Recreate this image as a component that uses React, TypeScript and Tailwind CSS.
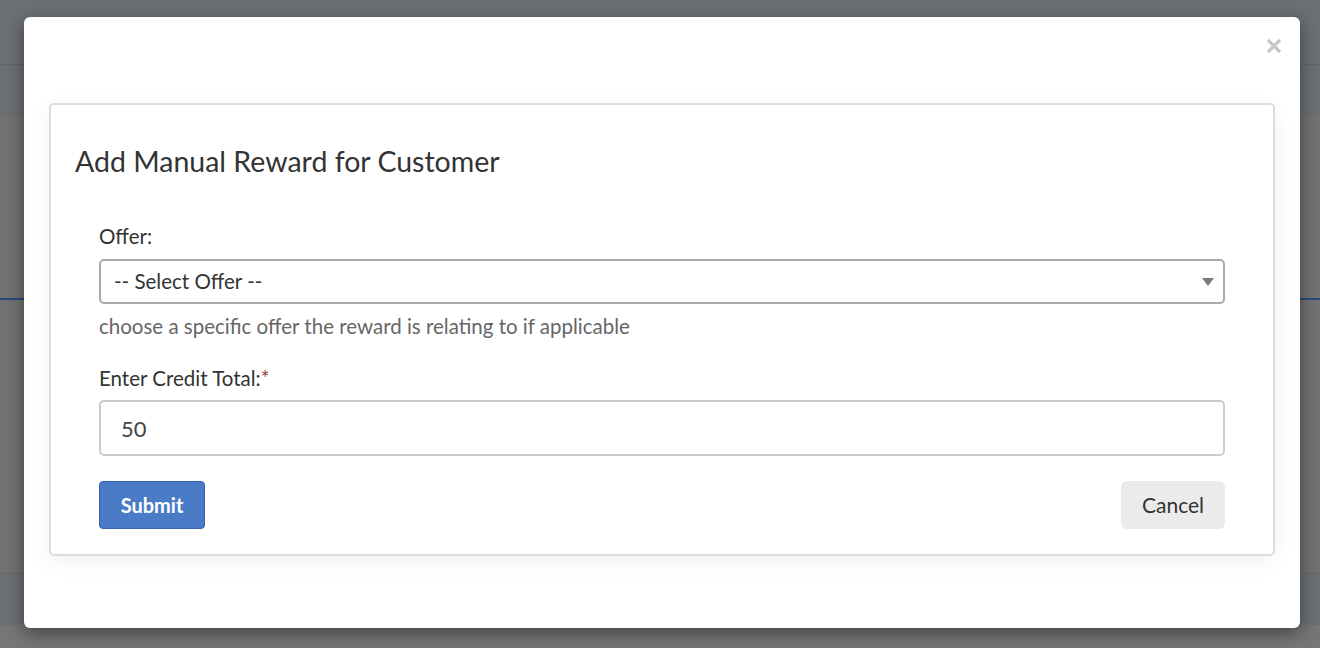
import React, { useState } from 'react';

const font = { fontFamily: 'Lato, "Open Sans", sans-serif' };

export default function App() {
  const [offer, setOffer] = useState('');
  const [credit, setCredit] = useState('50');

  return (
    <div className="relative w-[1320px] h-[648px] overflow-hidden bg-[#767676]" style={font}>
      {/* page behind the dimmed overlay */}
      <div className="h-[65px] bg-[#6b7075] border-b border-[#61666a]" />
      <div className="h-[50px] bg-[#6b7075]" />
      <div className="h-[185px] bg-[#727272] border-b-2 border-[#284a7c]" />
      <div className="h-[273px] bg-[#727272]" />
      <div className="h-[52px] bg-[#6b7075] border-t border-[#66696c]" />

      {/* modal */}
      <div className="absolute left-[24px] top-[17px] w-[1276px] h-[611px] bg-white rounded-md shadow-[0_5px_18px_rgba(0,0,0,0.45)] pt-[86px] px-[25px]">
        <button className="absolute right-[18px] top-[21px] text-[#c6c6c6]">
          <svg width="16" height="16" viewBox="0 0 16 16">
            <path d="M2 2L14 14M14 2L2 14" stroke="currentColor" strokeWidth="3.2" strokeLinecap="butt" />
          </svg>
        </button>

        <div className="border-2 border-[#d8dee2] rounded-[5px] bg-white shadow-[0_6px_22px_rgba(0,0,0,0.06)] pt-[41px] px-[24px] pb-[25px]">
          <h3 className="text-[28.5px] leading-[31px] text-[#333333]">Add Manual Reward for Customer</h3>

          <div className="px-[24px] mt-[46px]">
            <label className="block text-[20.5px] leading-[27px] text-[#333333]">Offer:</label>
            <div className="relative mt-[9px]">
              <select
                value={offer}
                onChange={e => setOffer(e.target.value)}
                className="appearance-none w-full h-[45px] border-2 border-[#a9a9a9] rounded-[5px] bg-white pl-[13px] text-[20.5px] text-[#333333] outline-none"
                style={font}
              >
                <option value="">-- Select Offer --</option>
              </select>
              <div className="pointer-events-none absolute right-[11px] top-[19px] w-0 h-0 border-l-[6px] border-r-[6px] border-t-[8px] border-l-transparent border-r-transparent border-t-[#7a7a7a]" />
            </div>
            <p className="mt-[9px] text-[20.5px] leading-[27px] text-[#666666]">
              choose a specific offer the reward is relating to if applicable
            </p>

            <label className="block mt-[25px] text-[20.5px] leading-[27px] text-[#333333]">
              Enter Credit Total:<span className="text-[#a23b3b]">*</span>
            </label>
            <input
              value={credit}
              onChange={e => setCredit(e.target.value)}
              className="block mt-[8px] w-full h-[56px] border-2 border-[#cccccc] rounded-[5px] px-[20px] text-[22px] text-[#444444] outline-none"
              style={font}
            />

            <div className="flex justify-between mt-[25px]">
              <button className="h-[48px] w-[106px] rounded-[4px] bg-[#4a7bc7] border border-[#3a63a5] text-white text-[20px] font-bold" style={font}>
                Submit
              </button>
              <button className="h-[48px] w-[104px] rounded-[6px] bg-[#ebebeb] text-[#333333] text-[21px]" style={font}>
                Cancel
              </button>
            </div>
          </div>
        </div>
      </div>
    </div>
  );
}
